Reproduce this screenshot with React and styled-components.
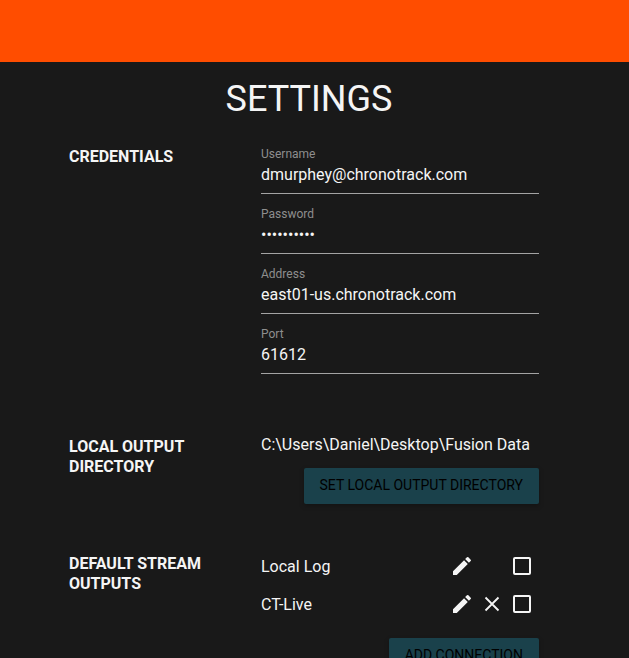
import React, { useState } from 'react';
import styled, { createGlobalStyle } from 'styled-components';
import { MdEdit } from 'react-icons/md';

const fields = [
    { id: 'username', label: 'Username', type: 'text', value: 'dmurphey@chronotrack.com' },
    { id: 'password', label: 'Password', type: 'password', value: 'chrono1234' },
    { id: 'address', label: 'Address', type: 'text', value: 'east01-us.chronotrack.com' },
    { id: 'port', label: 'Port', type: 'text', value: '61612' },
];

const outputs = [
    { name: 'Local Log', removable: false },
    { name: 'CT-Live', removable: true },
];

function Field({ id, label, type, value }) {
    const [text, setText] = useState(value);

    return (
        <FieldBox>
            <FieldLabel htmlFor={id}>{label}</FieldLabel>
            <FieldInput
                id={id}
                type={type}
                value={text}
                autoComplete="off"
                spellCheck={false}
                onChange={(e) => setText(e.target.value)}
            />
        </FieldBox>
    );
}

// thinner than the material close icon
function ThinClose() {
    return (
        <svg width="24" height="24" viewBox="0 0 24 24" fill="none" stroke="currentColor" strokeWidth="1.8">
            <path d="M5.5 5.5l13 13M18.5 5.5l-13 13" />
        </svg>
    );
}

function App() {
    return (
        <>
            <GlobalStyle />
            <TopBar />
            <Main>
                <Title>Settings</Title>
                <Sections>
                    <Section>
                        <SectionLabel>Credentials</SectionLabel>
                        <Credentials>
                            {fields.map((field) => (
                                <Field key={field.id} {...field} />
                            ))}
                        </Credentials>
                    </Section>

                    <Section>
                        <SectionLabel>Local Output Directory</SectionLabel>
                        <Directory>
                            <Path>C:\Users\Daniel\Desktop\Fusion Data</Path>
                            <RaisedButton type="button">Set Local Output Directory</RaisedButton>
                        </Directory>
                    </Section>

                    <Section>
                        <SectionLabel>Default Stream Outputs</SectionLabel>
                        <Outputs>
                            <OutputList>
                                {outputs.map(({ name, removable }) => (
                                    <OutputRow key={name}>
                                        <OutputName htmlFor={name}>{name}</OutputName>
                                        <IconButton type="button" aria-label={`Edit ${name}`}>
                                            <MdEdit />
                                        </IconButton>
                                        <IconButton type="button" aria-label={`Remove ${name}`} $hidden={!removable}>
                                            <ThinClose />
                                        </IconButton>
                                        <Checkbox id={name} type="checkbox" />
                                    </OutputRow>
                                ))}
                            </OutputList>
                            <RaisedButton type="button">Add Connection</RaisedButton>
                        </Outputs>
                    </Section>
                </Sections>
            </Main>
        </>
    );
}

export default App;

const GlobalStyle = createGlobalStyle`
    * {
        box-sizing: border-box;
    }

    html {
        background: #191919;
        scrollbar-width: none;
    }

    body {
        margin: 0;
        color: #f5f5f5;
        font-family: Roboto, sans-serif;
        font-size: 16px;
        line-height: 20px;
    }

    button,
    input {
        font-family: inherit;
    }
`;

const TopBar = styled.header`
    height: 62px;
    background: #ff4d00;
`;

const Main = styled.main`
    padding: 16px 11px 40px 0;
`;

const Title = styled.h1`
    margin: 0;
    font-size: 36px;
    font-weight: 400;
    line-height: 42px;
    text-align: center;
    text-transform: uppercase;
`;

const Sections = styled.div`
    display: flex;
    flex-direction: column;
    gap: 37px;
    max-width: 480px;
    margin: 14px auto 0;
    padding-right: 10px;
`;

const Section = styled.section`
    display: grid;
    grid-template-columns: 192px 1fr;
`;

const SectionLabel = styled.h2`
    margin: 0;
    padding: 13px 48px 0 0;
    font-size: 16px;
    font-weight: 700;
    line-height: 20px;
    text-transform: uppercase;
`;

const Credentials = styled.div`
    padding-bottom: 13px;
`;

const FieldBox = styled.div`
    display: flex;
    flex-direction: column;
    padding-top: 12px;
`;

const FieldLabel = styled.label`
    color: #8e8e8e;
    font-size: 12px;
    line-height: 16px;
`;

const FieldInput = styled.input`
    width: 100%;
    height: 32px;
    padding: 0 0 7px;
    border: 0;
    border-bottom: 1px solid #a3a3a3;
    outline: 0;
    background: transparent;
    color: #f5f5f5;
    font-size: 16px;
`;

const Directory = styled.div`
    display: flex;
    flex-direction: column;
    align-items: flex-end;
    gap: 13px;
    padding-top: 11px;
`;

const Path = styled.div`
    width: 100%;
    white-space: nowrap;
`;

const RaisedButton = styled.button`
    height: 36px;
    padding: 0 16px 2px;
    border: 0;
    border-radius: 2px;
    background: #1a414b;
    box-shadow: 0 2px 5px rgba(0, 0, 0, 0.26);
    color: #000;
    font-size: 14px;
    font-weight: 400;
    text-transform: uppercase;
    cursor: pointer;
`;

const Outputs = styled.div`
    display: flex;
    flex-direction: column;
    align-items: flex-end;
    gap: 15px;
    padding-top: 6px;
`;

const OutputList = styled.ul`
    width: 100%;
    margin: 0;
    padding: 0;
    list-style: none;
`;

const OutputRow = styled.li`
    display: flex;
    align-items: center;
    gap: 6px;
    height: 38px;
    padding-right: 8px;
`;

const OutputName = styled.label`
    flex: 1;
    padding-top: 2px;
`;

const IconButton = styled.button`
    display: flex;
    padding: 0;
    border: 0;
    background: transparent;
    color: #f5f5f5;
    font-size: 24px;
    cursor: pointer;
    visibility: ${(props) => (props.$hidden ? 'hidden' : 'visible')};
`;

const Checkbox = styled.input`
    appearance: none;
    width: 18px;
    height: 18px;
    margin: 0 0 0 3px;
    border: 2px solid #f5f5f5;
    border-radius: 2px;
    cursor: pointer;

    &:checked {
        background: #f5f5f5;
    }
`;
